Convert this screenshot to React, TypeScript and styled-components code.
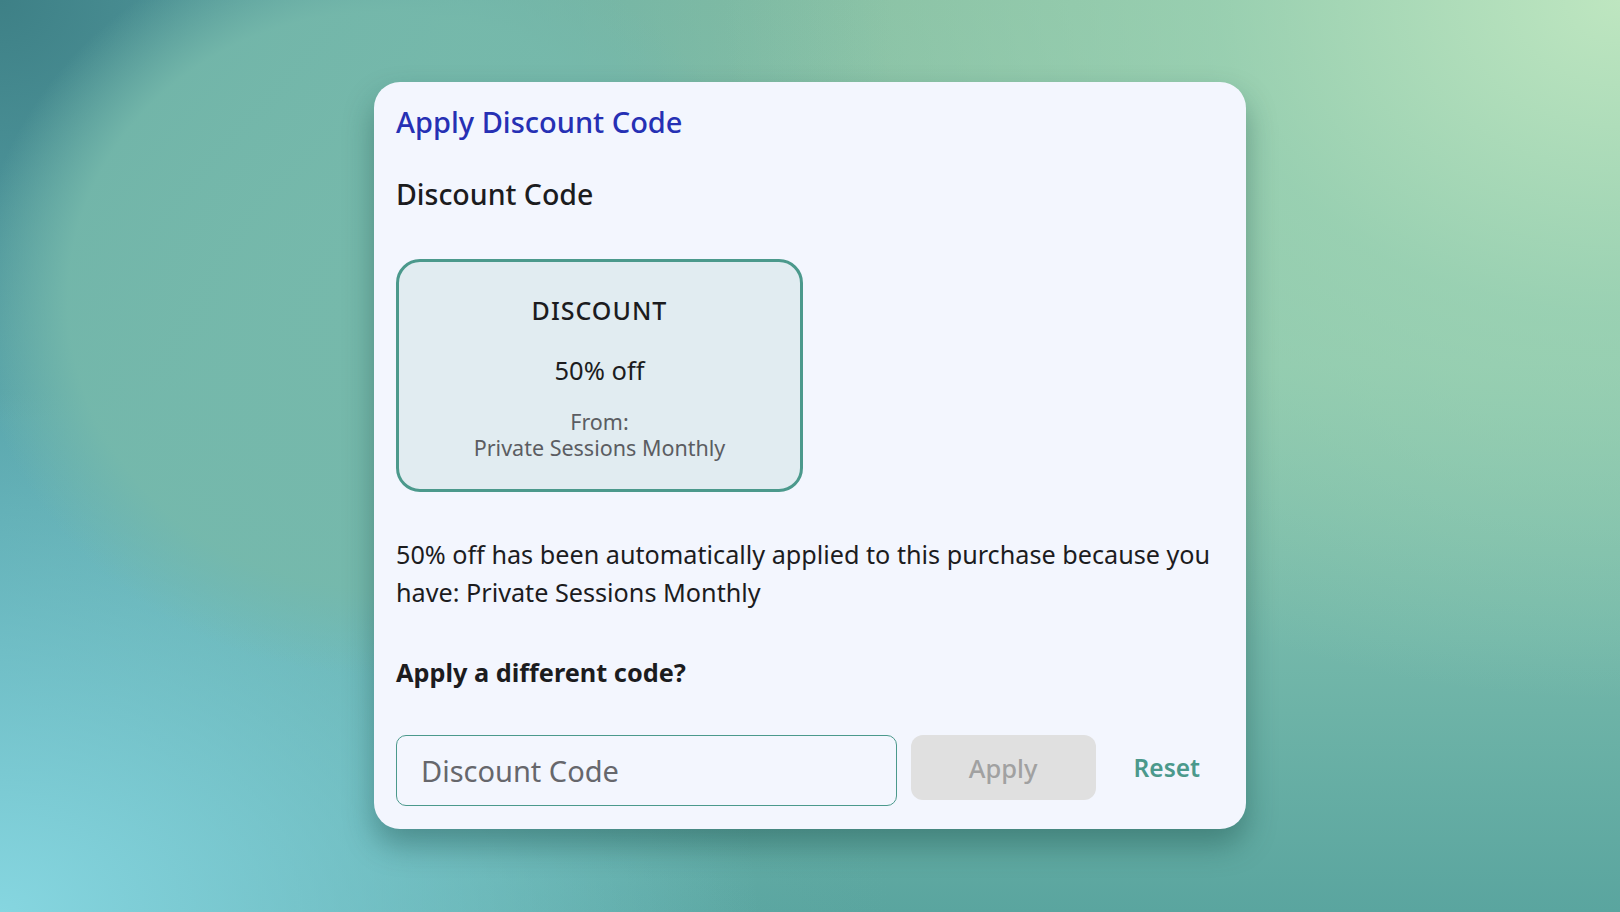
import React from 'react'
import styled, { createGlobalStyle } from 'styled-components';

const GlobalStyle = createGlobalStyle`
    html, body {
        margin: 0;
        padding: 0;
    }
    body {
        font-family: "Noto Sans", "Open Sans", sans-serif;
        color: #1c1c1e;
    }
    * {
        box-sizing: border-box;
    }
`;

type DiscountProps = {
    amount: string;
    source: string;
}

const DiscountTicket: React.FC<DiscountProps> = ({ amount, source }) => {
    return (
        <Ticket>
            <TicketLabel>DISCOUNT</TicketLabel>
            <TicketAmount>{amount}</TicketAmount>
            <TicketSource>
                From:
                <br />
                {source}
            </TicketSource>
        </Ticket>
    )
}

export default function App() {
    const amount = '50% off';
    const source = 'Private Sessions Monthly';

    return (
        <Page>
            <GlobalStyle />
            <Card>
                <Title>Apply Discount Code</Title>
                <SectionHeading>Discount Code</SectionHeading>
                <DiscountTicket amount={amount} source={source} />
                <Notice>
                    {amount} has been automatically applied to this purchase because you have: {source}
                </Notice>
                <Question>Apply a different code?</Question>
                <CodeRow>
                    <CodeInput placeholder="Discount Code" />
                    <ApplyButton disabled>Apply</ApplyButton>
                    <ResetButton>Reset</ResetButton>
                </CodeRow>
            </Card>
        </Page>
    )
}

const teal = '#4b998c';

const Page = styled.div`
    width: 100vw;
    height: 100vh;
    overflow: hidden;
    padding-top: 82px;
    padding-left: 374px;
    background:
        radial-gradient(ellipse 520px 480px at 380px 300px, rgba(118, 185, 171, 1) 0%, rgba(118, 185, 171, 0.9) 60%, rgba(118, 185, 171, 0) 78%),
        radial-gradient(ellipse 460px 420px at 0px 0px, rgba(62, 128, 134, 1), rgba(62, 128, 134, 0) 100%),
        radial-gradient(ellipse 760px 520px at 0% 100%, rgba(134, 214, 224, 1), rgba(134, 214, 224, 0) 100%),
        linear-gradient(90deg, rgba(90, 166, 172, 1) 0%, rgba(98, 172, 170, 0.6) 30%, rgba(110, 180, 168, 0) 55%),
        radial-gradient(ellipse 900px 700px at 100% 0%, rgba(190, 230, 192, 1) 0%, rgba(160, 214, 182, 0.7) 45%, rgba(140, 200, 175, 0) 100%),
        linear-gradient(180deg, #86bea2 0%, #8ac5ab 40%, #74b8aa 70%, #5aa59f 100%);
`;

const Card = styled.div`
    width: 872px;
    height: 747px;
    padding: 22px;
    border-radius: 26px;
    background: #f3f6fe;
    box-shadow: 0px 16px 30px 0px rgba(20, 70, 66, .4);
    display: flex;
    flex-direction: column;
    align-items: flex-start;
`;

const Title = styled.h1`
    margin: 0;
    font-size: 29px;
    line-height: 36px;
    font-weight: 500;
    color: #2630b4;
`;

const SectionHeading = styled.h2`
    margin: 37px 0 0 0;
    font-size: 28.5px;
    line-height: 34px;
    font-weight: 500;
    color: #1c1c1e;
`;

const Ticket = styled.div`
    margin-top: 48px;
    width: 407px;
    height: 233px;
    padding: 32px 12px 28px;
    border: 3px solid ${teal};
    border-radius: 24px;
    background: #e1ecf1;
    display: flex;
    flex-direction: column;
    align-items: center;
    text-align: center;
`;

const TicketLabel = styled.div`
    font-size: 25px;
    line-height: 32px;
    font-weight: 500;
    letter-spacing: 1px;
    color: #1c1c1e;
`;

const TicketAmount = styled.div`
    margin-top: 28px;
    font-size: 25.5px;
    line-height: 32px;
    color: #1c1c1e;
`;

const TicketSource = styled.div`
    margin-top: 23px;
    font-size: 21.5px;
    line-height: 26px;
    color: #5b5d62;
`;

const Notice = styled.p`
    margin: 44px 0 0 0;
    font-size: 25.2px;
    line-height: 37.5px;
    color: #1c1c1e;
`;

const Question = styled.h3`
    margin: 44px 0 0 0;
    font-size: 25.3px;
    line-height: 34px;
    font-weight: 700;
    color: #1c1c1e;
`;

const CodeRow = styled.div`
    margin-top: 46px;
    width: 100%;
    display: flex;
    align-items: flex-start;
    gap: 14px;
`;

const CodeInput = styled.input`
    flex: 1;
    min-width: 0;
    height: 71px;
    padding: 0 24px;
    border: 1px solid ${teal};
    border-radius: 10px;
    background: #f3f6fe;
    font-family: inherit;
    font-size: 29px;
    color: #1c1c1e;
    outline: none;
    &::placeholder {
        color: #66676c;
    }
`;

const ApplyButton = styled.button`
    width: 185px;
    height: 65px;
    border: none;
    border-radius: 12px;
    background: #e0e0e0;
    font-family: inherit;
    font-size: 25.5px;
    font-weight: 500;
    color: #a1a1a1;
`;

const ResetButton = styled.button`
    height: 65px;
    padding: 0 24px;
    border: none;
    background: transparent;
    font-family: inherit;
    font-size: 24.5px;
    font-weight: 600;
    color: ${teal};
    cursor: pointer;
`;
